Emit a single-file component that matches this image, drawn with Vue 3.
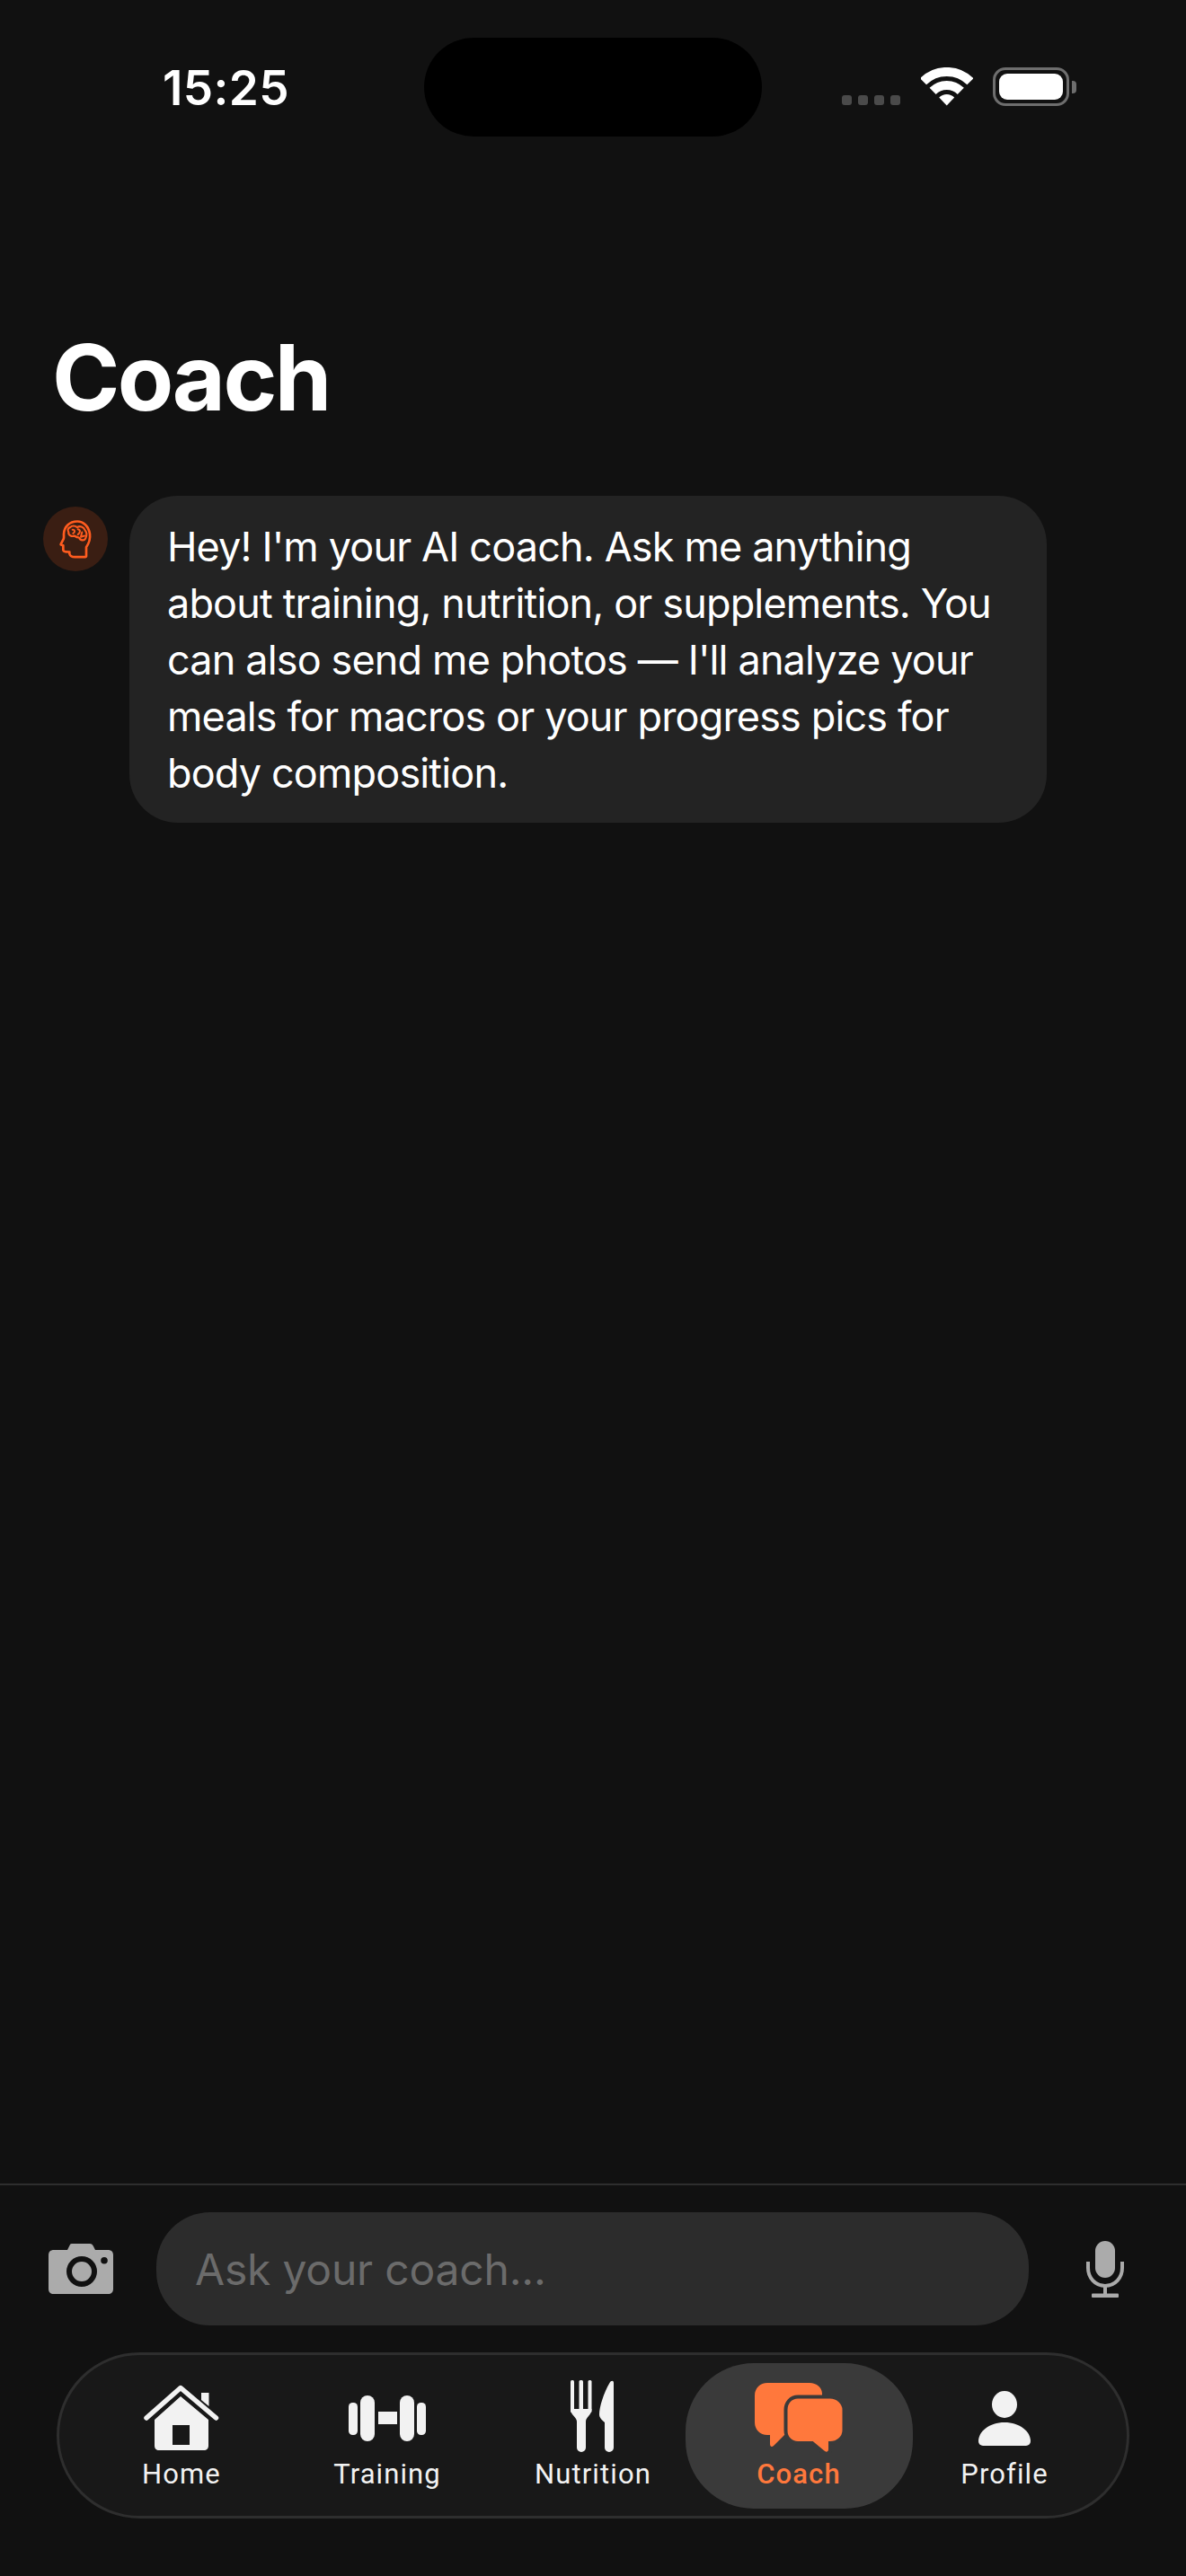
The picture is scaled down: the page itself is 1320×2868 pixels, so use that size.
<script setup>
const dots = [0, 1, 2, 3];
</script>

<template>
  <div class="screen">
    <header class="status">
      <span class="time">15:25</span>
      <div class="island"></div>
      <div class="status-right">
        <div class="dots">
          <i v-for="d in dots" :key="d"></i>
        </div>
        <svg class="wifi" viewBox="0 0 58 43" fill="none" stroke="#fff" stroke-width="10">
          <path d="M2.5 15.8A37 37 0 0 1 54.9 15.8" />
          <path d="M13.1 26.4A22 22 0 0 1 44.3 26.4" />
          <path d="M28.7 42.5L20.2 33.5A12 12 0 0 1 37.2 33.5Z" fill="#fff" stroke="none" />
        </svg>
        <div class="battery">
          <div class="battery-body"><div class="battery-fill"></div></div>
          <div class="battery-nub"></div>
        </div>
      </div>
    </header>

    <h1 class="title">Coach</h1>

    <main class="messages">
      <div class="avatar">
        <svg class="brain" viewBox="130 140 120 140" fill="none" stroke="#ff5c1f" stroke-width="8" stroke-linejoin="round" stroke-linecap="round">
          <path d="M226 266V236C236 222 240 210 238 192C234 166 216 150 196 150C170 150 152 168 151 192C151 200 152 204 150 209L141 226C140 229 146 229 149 230V246C150 252 158 252 170 252V258C172 266 178 269 188 269H218C223 269 226 268 226 266Z" />
          <path d="M172 170C164 172 163 182 167 186C165 196 178 202 186 198C192 202 198 204 202 204C206 214 220 216 224 206C228 196 228 186 222 180C218 168 204 164 196 170C188 164 178 164 172 170Z" stroke-width="6.500" />
          <path d="M180 178C188 176 190 186 182 190M198 176C208 178 206 188 198 194M212 186L208 202L220 198" stroke-width="6" />
        </svg>
      </div>
      <div class="bubble">Hey! I'm your AI coach. Ask me anything about training, nutrition, or supplements. You can also send me photos — I'll analyze your meals for macros or your progress pics for body composition.</div>
    </main>

    <section class="composer">
      <svg class="camera" viewBox="0 0 72 56">
        <path fill="#ababab" fill-rule="evenodd" d="M26 0H46C48 0 49 1 50 3L52 7H66C70 7 72 9 72 13V50C72 54 70 56 66 56H6C2 56 0 54 0 50V13C0 9 2 7 6 7H21L23 3C24 1 24 0 26 0ZM37 14A17 17 0 1 0 37 48A17 17 0 1 0 37 14ZM37 20A11 11 0 1 1 37 42A11 11 0 1 1 37 20ZM62 15A3.8 3.8 0 1 0 62 22.6A3.8 3.8 0 1 0 62 15Z" />
      </svg>
      <div class="field">Ask your coach...</div>
      <svg class="mic" viewBox="0 0 42 63" fill="none" stroke="#ababab">
        <rect x="10" y="0" width="22" height="41" rx="11" fill="#ababab" stroke="none" />
        <path d="M2 23V30C2 41 10 50 21 50C32 50 40 41 40 30V23" stroke-width="4" />
        <path d="M21 50V60" stroke-width="4" />
        <rect x="6" y="58.5" width="30" height="4.5" rx="1" fill="#ababab" stroke="none" />
      </svg>
    </section>

    <nav class="tabs">
      <div class="tab">
        <svg class="ic-home" viewBox="0 0 86 74">
          <path fill="#f2f2f2" d="M65 9H73.500V24L65 17Z" />
          <path fill="none" stroke="#f2f2f2" stroke-width="5.500" stroke-linecap="round" stroke-linejoin="round" d="M4 37L42 3.500L81.500 37" />
          <path fill="#f2f2f2" fill-rule="evenodd" d="M42 13L73 39V68C73 71 71 73 68 73H18C15 73 13 71 13 68V39ZM33 45V67H52V45Z" />
        </svg>
        <span>Home</span>
      </div>
      <div class="tab">
        <svg class="ic-train" viewBox="0 0 87 51" fill="#f2f2f2">
          <rect x="0" y="8" width="10" height="36" rx="4.500" />
          <rect x="13" y="0" width="16" height="51" rx="8" />
          <rect x="33" y="18" width="21" height="14" />
          <rect x="57" y="0" width="16" height="51" rx="8" />
          <rect x="76" y="8" width="10" height="36" rx="4.500" />
        </svg>
        <span>Training</span>
      </div>
      <div class="tab">
        <svg class="ic-food" viewBox="0 0 50 80" fill="#f2f2f2">
          <rect x="0" y="0" width="4" height="36" rx="1.500" />
          <rect x="9.500" y="0" width="4.500" height="36" rx="1.500" />
          <rect x="19.500" y="0" width="4" height="36" rx="1.500" />
          <path d="M0 32H23.500C23.500 39 17 41 17 46V75A5 5 0 0 1 7 75V46C7 41 0 39 0 32Z" />
          <path d="M48 3C48 0 45 0 43.500 3C37 14 32 30 32 38C32 42 35 44 38 47V75A4.800 4.800 0 0 0 48 75Z" />
        </svg>
        <span>Nutrition</span>
      </div>
      <div class="tab active">
        <svg class="ic-chat" viewBox="0 0 98 78">
          <path fill="#ff783c" d="M14 0H61C69 0 75 5 75 12V30H36V58H33L21 70C19 72 17 71 17 68V58H14C6 58 0 52 0 44V14C0 6 6 0 14 0Z" />
          <path fill="#ff783c" stroke="#3a3a3a" stroke-width="4" d="M48 15.500H84C92 15.500 99.500 22 99.500 30V53C99.500 61 92 67 84 67H84V74C84 79 79 80 76 77L64 67H48C40 67 34.500 61 34.500 53V30C34.500 22 40 15.500 48 15.500Z" />
        </svg>
        <span>Coach</span>
      </div>
      <div class="tab">
        <svg class="ic-user" viewBox="0 0 58 62" fill="#f2f2f2">
          <ellipse cx="29" cy="15" rx="14" ry="15" />
          <path d="M0 56C0 45 12 35 29 35C46 35 58 45 58 56A5 5 0 0 1 53 61H5A5 5 0 0 1 0 56Z" />
        </svg>
        <span>Profile</span>
      </div>
    </nav>
  </div>
</template>

<style>
html,
body {
  margin: 0;
  background: #111111;
}
</style>

<style scoped>
.screen {
  display: flex;
  flex-direction: column;
  width: 1320px;
  height: 2868px;
  background: #111111;
  color: #fff;
  font-family: Inter, "Liberation Sans", sans-serif;
  box-sizing: border-box;
  padding-bottom: 64px;
}

.status {
  position: relative;
  display: flex;
  justify-content: space-between;
  padding-top: 42px;
  height: 152px;
  box-sizing: border-box;
}

.time {
  margin: 34px 0 0 181px;
  font-size: 53px;
  line-height: 44px;
  font-weight: 600;
  letter-spacing: 0.4px;
}

.island {
  position: absolute;
  left: 472px;
  top: 42px;
  width: 376px;
  height: 110px;
  border-radius: 55px;
  background: #000;
}

.status-right {
  display: flex;
  align-items: flex-start;
  padding: 33px 122px 0 0;
}

.dots {
  display: flex;
  gap: 7px;
  margin: 31px 23px 0 0;
}

.dots i {
  width: 11px;
  height: 11px;
  border-radius: 3px;
  background: #4a4a4a;
}

.wifi {
  width: 58px;
  height: 43px;
  margin-right: 22px;
}

.battery {
  display: flex;
  align-items: center;
  height: 43px;
}

.battery-body {
  width: 85px;
  height: 43px;
  box-sizing: border-box;
  padding: 4px;
  border: 3px solid #6e6e6e;
  border-radius: 14px;
}

.battery-fill {
  height: 100%;
  border-radius: 9px;
  background: #fff;
}

.battery-nub {
  width: 5px;
  height: 14px;
  margin-left: 3px;
  border-radius: 0 4px 4px 0;
  background: #6e6e6e;
}

.title {
  margin: 208px 0 0 58px;
  font-size: 102px;
  line-height: 120px;
  font-weight: 700;
  letter-spacing: -2.6px;
}

.messages {
  flex: 1;
  display: flex;
  align-items: flex-start;
  gap: 24px;
  padding: 0 155px 0 48px;
  margin-top: 72px;
}

.avatar {
  display: flex;
  flex: none;
  align-items: center;
  justify-content: center;
  width: 72px;
  height: 72px;
  margin-top: 12px;
  border-radius: 50%;
  background: #3a1e13;
}

.brain {
  width: 40px;
  height: 47px;
}

.bubble {
  padding: 25px 42px 24px 42px;
  border-radius: 54px;
  background: #232323;
  font-size: 45px;
  font-weight: 380;
  line-height: 63px;
  letter-spacing: -0.85px;
}

.composer {
  display: flex;
  align-items: center;
  padding: 30px 69px 30px 54px;
  border-top: 2px solid #2e2e2e;
}

.camera {
  flex: none;
  width: 72px;
  height: 56px;
}

.field {
  flex: 1;
  height: 126px;
  margin: 0 64px 0 48px;
  padding-left: 43px;
  border-radius: 60px;
  background: #2c2c2c;
  color: #6b6b6b;
  font-size: 48px;
  font-weight: 380;
  line-height: 128px;
  letter-spacing: -0.2px;
}

.mic {
  flex: none;
  width: 42px;
  height: 63px;
}

.tabs {
  display: grid;
  grid-template-columns: repeat(5, 1fr);
  height: 185px;
  margin: 0 63px;
  padding: 0 21.5px;
  box-sizing: border-box;
  border: 3px solid #2e2e2e;
  border-radius: 93px;
  background: #181818;
}

.tab {
  position: relative;
  display: flex;
  flex-direction: column;
  align-items: center;
  justify-content: flex-end;
  height: 151px;
  color: #f2f2f2;
  font-family: Roboto, Inter, sans-serif;
  font-size: 31px;
  font-weight: 400;
  line-height: 36px;
  letter-spacing: 1.1px;
}

.tab span {
  position: relative;
  margin-top: 8px;
}

.tab svg {
  position: relative;
}

.tab.active {
  color: #ff783c;
  font-weight: 500;
}

.tab.active::before {
  content: "";
  position: absolute;
  left: -12px;
  right: -12px;
  top: 9px;
  height: 162px;
  border-radius: 76px;
  background: #3a3a3a;
}

.ic-home {
  width: 86px;
  height: 74px;
}

.ic-train {
  width: 87px;
  height: 51px;
  margin-bottom: 11px;
}

.ic-food {
  width: 50px;
  height: 80px;
  margin-bottom: -1px;
}

.ic-chat {
  width: 98px;
  height: 78px;
  margin-bottom: -2px;
}

.ic-user {
  width: 58px;
  height: 62px;
  margin-bottom: 5px;
}
</style>
